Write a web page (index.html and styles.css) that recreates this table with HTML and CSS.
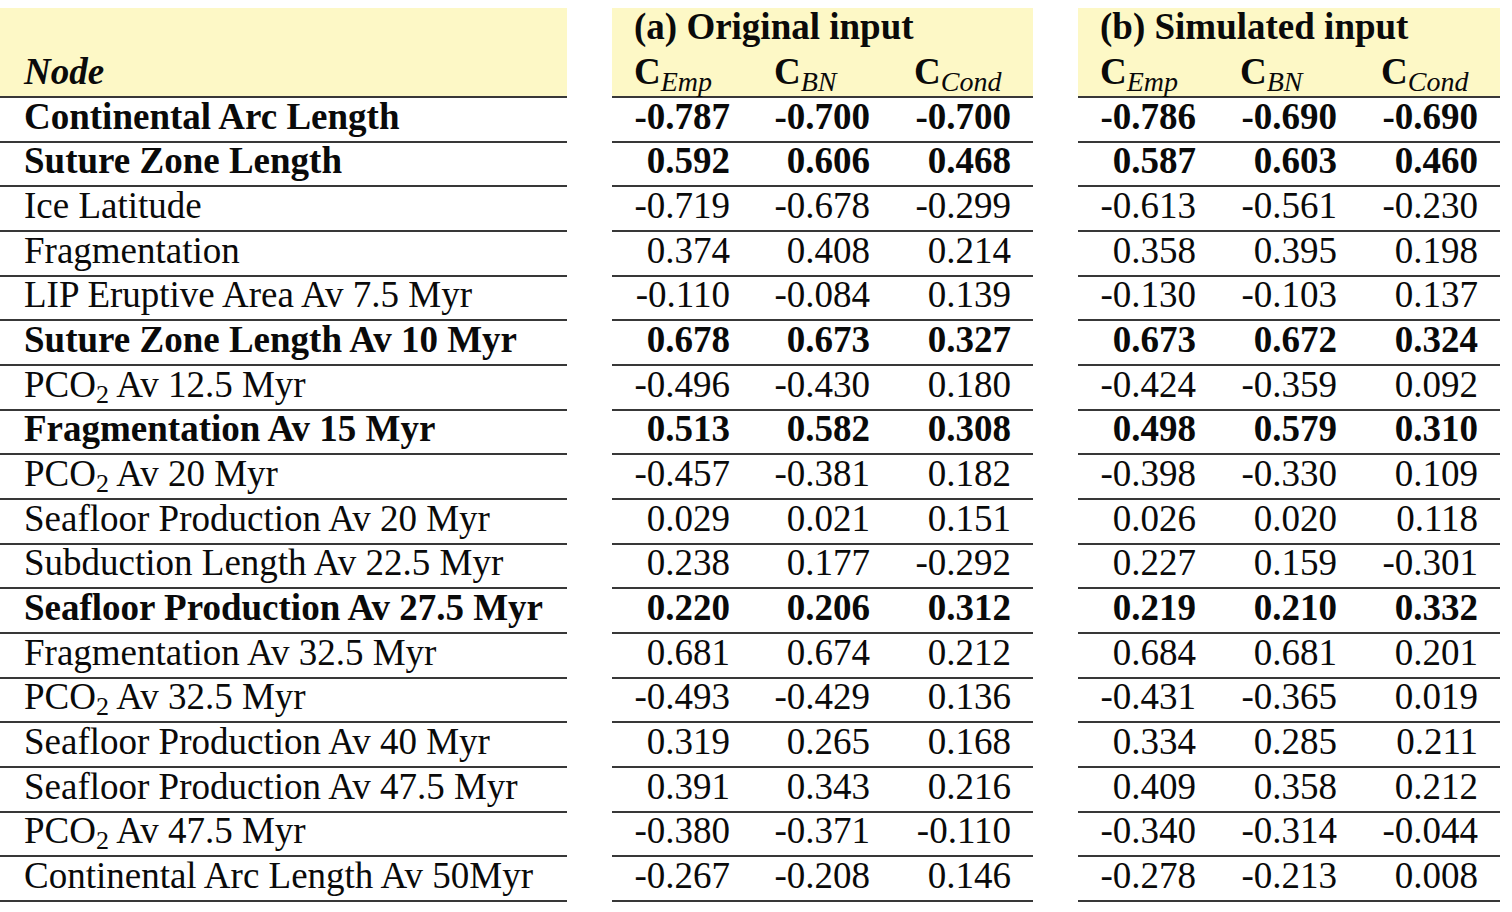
FILE: index.html
```html
<!DOCTYPE html>
<html lang="en">
<head>
<meta charset="utf-8">
<title>Node correlations</title>
<link rel="stylesheet" href="styles.css">
</head>
<body>
<table class="tbl">
  <colgroup>
    <col class="c-node"><col class="c-gap">
    <col class="c-a1"><col class="c-a2"><col class="c-a3"><col class="c-gap">
    <col class="c-b1"><col class="c-b2"><col class="c-b3">
  </colgroup>
  <thead>
    <tr class="h1">
      <th class="node hd" rowspan="2"><em>Node</em></th>
      <th class="gap" rowspan="2"></th>
      <th class="grp hd" colspan="3">(a) Original input</th>
      <th class="gap" rowspan="2"></th>
      <th class="grp hd" colspan="3">(b) Simulated input</th>
    </tr>
    <tr class="h2">
      <th class="sub hd">C<span class="sb">Emp</span></th>
      <th class="sub hd">C<span class="sb">BN</span></th>
      <th class="sub hd">C<span class="sb">Cond</span></th>
      <th class="sub hd">C<span class="sb">Emp</span></th>
      <th class="sub hd">C<span class="sb">BN</span></th>
      <th class="sub hd">C<span class="sb">Cond</span></th>
    </tr>
  </thead>
  <tbody>
    <tr class="b"><td class="node">Continental Arc Length</td><td class="gap"></td><td>-0.787</td><td>-0.700</td><td>-0.700</td><td class="gap"></td><td>-0.786</td><td>-0.690</td><td>-0.690</td></tr>
    <tr class="b"><td class="node">Suture Zone Length</td><td class="gap"></td><td>0.592</td><td>0.606</td><td>0.468</td><td class="gap"></td><td>0.587</td><td>0.603</td><td>0.460</td></tr>
    <tr><td class="node">Ice Latitude</td><td class="gap"></td><td>-0.719</td><td>-0.678</td><td>-0.299</td><td class="gap"></td><td>-0.613</td><td>-0.561</td><td>-0.230</td></tr>
    <tr><td class="node">Fragmentation</td><td class="gap"></td><td>0.374</td><td>0.408</td><td>0.214</td><td class="gap"></td><td>0.358</td><td>0.395</td><td>0.198</td></tr>
    <tr><td class="node">LIP Eruptive Area Av 7.5 Myr</td><td class="gap"></td><td>-0.110</td><td>-0.084</td><td>0.139</td><td class="gap"></td><td>-0.130</td><td>-0.103</td><td>0.137</td></tr>
    <tr class="b"><td class="node">Suture Zone Length Av 10 Myr</td><td class="gap"></td><td>0.678</td><td>0.673</td><td>0.327</td><td class="gap"></td><td>0.673</td><td>0.672</td><td>0.324</td></tr>
    <tr><td class="node">PCO<span class="sb2">2</span> Av 12.5 Myr</td><td class="gap"></td><td>-0.496</td><td>-0.430</td><td>0.180</td><td class="gap"></td><td>-0.424</td><td>-0.359</td><td>0.092</td></tr>
    <tr class="b"><td class="node">Fragmentation Av 15 Myr</td><td class="gap"></td><td>0.513</td><td>0.582</td><td>0.308</td><td class="gap"></td><td>0.498</td><td>0.579</td><td>0.310</td></tr>
    <tr><td class="node">PCO<span class="sb2">2</span> Av 20 Myr</td><td class="gap"></td><td>-0.457</td><td>-0.381</td><td>0.182</td><td class="gap"></td><td>-0.398</td><td>-0.330</td><td>0.109</td></tr>
    <tr><td class="node">Seafloor Production Av 20 Myr</td><td class="gap"></td><td>0.029</td><td>0.021</td><td>0.151</td><td class="gap"></td><td>0.026</td><td>0.020</td><td>0.118</td></tr>
    <tr><td class="node">Subduction Length Av 22.5 Myr</td><td class="gap"></td><td>0.238</td><td>0.177</td><td>-0.292</td><td class="gap"></td><td>0.227</td><td>0.159</td><td>-0.301</td></tr>
    <tr class="b"><td class="node">Seafloor Production Av 27.5 Myr</td><td class="gap"></td><td>0.220</td><td>0.206</td><td>0.312</td><td class="gap"></td><td>0.219</td><td>0.210</td><td>0.332</td></tr>
    <tr><td class="node">Fragmentation Av 32.5 Myr</td><td class="gap"></td><td>0.681</td><td>0.674</td><td>0.212</td><td class="gap"></td><td>0.684</td><td>0.681</td><td>0.201</td></tr>
    <tr><td class="node">PCO<span class="sb2">2</span> Av 32.5 Myr</td><td class="gap"></td><td>-0.493</td><td>-0.429</td><td>0.136</td><td class="gap"></td><td>-0.431</td><td>-0.365</td><td>0.019</td></tr>
    <tr><td class="node">Seafloor Production Av 40 Myr</td><td class="gap"></td><td>0.319</td><td>0.265</td><td>0.168</td><td class="gap"></td><td>0.334</td><td>0.285</td><td>0.211</td></tr>
    <tr><td class="node">Seafloor Production Av 47.5 Myr</td><td class="gap"></td><td>0.391</td><td>0.343</td><td>0.216</td><td class="gap"></td><td>0.409</td><td>0.358</td><td>0.212</td></tr>
    <tr><td class="node">PCO<span class="sb2">2</span> Av 47.5 Myr</td><td class="gap"></td><td>-0.380</td><td>-0.371</td><td>-0.110</td><td class="gap"></td><td>-0.340</td><td>-0.314</td><td>-0.044</td></tr>
    <tr><td class="node">Continental Arc Length Av 50Myr</td><td class="gap"></td><td>-0.267</td><td>-0.208</td><td>0.146</td><td class="gap"></td><td>-0.278</td><td>-0.213</td><td>0.008</td></tr>
  </tbody>
</table>
</body>
</html>
```

FILE: styles.css
```css
html, body {
  margin: 0;
  padding: 0;
  background: #ffffff;
}

body {
  font-family: "Liberation Serif", "Times New Roman", serif;
  color: #0a0a0a;
  font-size: 37px;
}

.tbl {
  margin-top: 8px;
  border-collapse: separate;
  border-spacing: 0;
  table-layout: fixed;
  width: 1500px;
}

.c-node { width: 567px; }
.c-gap { width: 45px; }
.c-a1 { width: 140px; }
.c-a2 { width: 140px; }
.c-a3 { width: 141px; }
.c-b1 { width: 140px; }
.c-b2 { width: 141px; }
.c-b3 { width: 141px; }

.tbl th,
.tbl td {
  padding: 0 22px 8px 0;
  line-height: 32px;
  vertical-align: bottom;
  white-space: nowrap;
  border-bottom: 2px solid #383838;
  text-align: right;
  font-weight: normal;
}

.tbl .gap {
  border-bottom: none;
  padding: 0;
  background: transparent;
}

.tbl .node {
  text-align: left;
  padding-left: 24px;
  padding-right: 0;
}

.tbl tbody tr {
  height: 44.67px;
}

.tbl tr.b td {
  font-weight: bold;
}

.hd {
  background: #fdf8c6;
}

.tbl th.node {
  font-weight: bold;
  padding-bottom: 8px;
}

.tbl tr.h1 {
  height: 44px;
}

.tbl tr.h2 {
  height: 46px;
}

.tbl th.grp {
  border-bottom: none;
  text-align: left;
  font-weight: bold;
  padding-left: 22px;
  padding-bottom: 9px;
}

.tbl th.sub {
  text-align: left;
  font-weight: bold;
  padding-left: 22px;
  padding-right: 0;
  padding-bottom: 8px;
}

.sb {
  font-size: 28px;
  font-style: italic;
  font-weight: normal;
  vertical-align: -7px;
  line-height: 0;
}

.sb2 {
  font-size: 26px;
  vertical-align: -6px;
  line-height: 0;
}
```
